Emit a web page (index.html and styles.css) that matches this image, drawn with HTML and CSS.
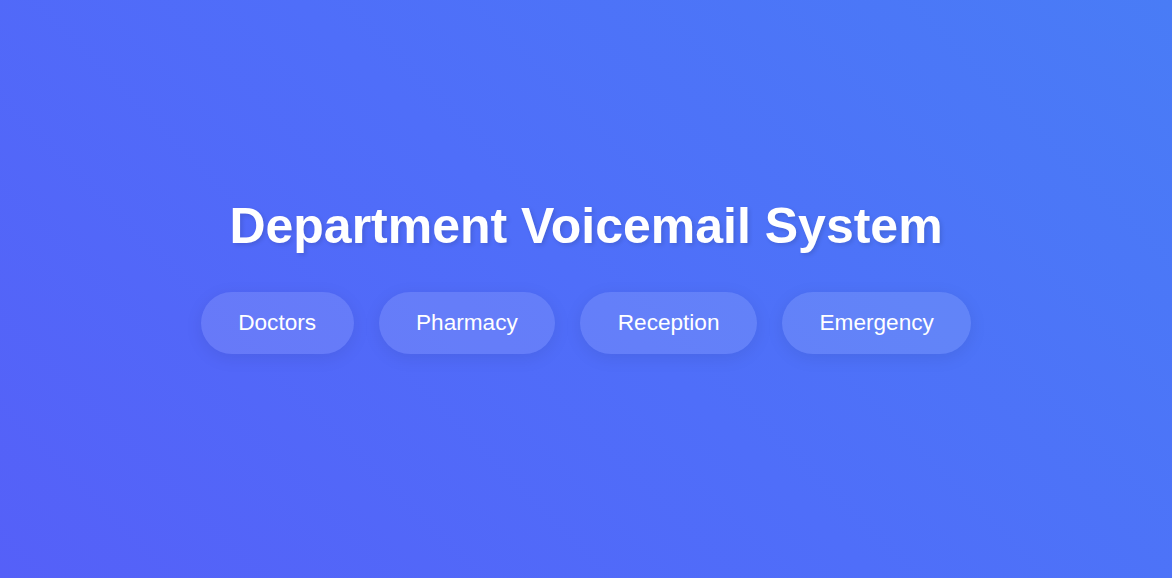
FILE: index.html
```html
<!DOCTYPE html>
<html lang="en">
<head>
<meta charset="utf-8">
<title>Department Voicemail System</title>
<link rel="stylesheet" href="styles.css">
</head>
<body>
<main class="page">
  <h1 class="title">Department Voicemail System</h1>
  <div class="buttons">
    <button class="dept">Doctors</button>
    <button class="dept">Pharmacy</button>
    <button class="dept">Reception</button>
    <button class="dept">Emergency</button>
  </div>
</main>
</body>
</html>
```
FILE: styles.css
```css
html, body {
  margin: 0;
  padding: 0;
  height: 100%;
}
body {
  font-family: "Liberation Sans", Arial, sans-serif;
  background: linear-gradient(45deg, #5560f8 0%, #4f6ef9 50%, #497cf6 100%);
  color: #fff;
}
.page {
  height: 100vh;
  box-sizing: border-box;
  padding-bottom: 27px;
  display: flex;
  flex-direction: column;
  align-items: center;
  justify-content: center;
}
.title {
  margin: 0 0 37px;
  font-size: 50px;
  font-weight: 700;
  line-height: normal;
  text-shadow: 2px 2px 4px rgba(0, 0, 0, 0.12);
}
.buttons {
  display: flex;
  gap: 25px;
}
.dept {
  font-family: inherit;
  font-size: 22.6px;
  line-height: normal;
  color: #fff;
  background: rgba(255, 255, 255, 0.12);
  border: none;
  border-radius: 40px;
  padding: 18px 37.5px;
  box-shadow: 0 4px 18px rgba(0, 0, 0, 0.08);
  cursor: pointer;
}
```
